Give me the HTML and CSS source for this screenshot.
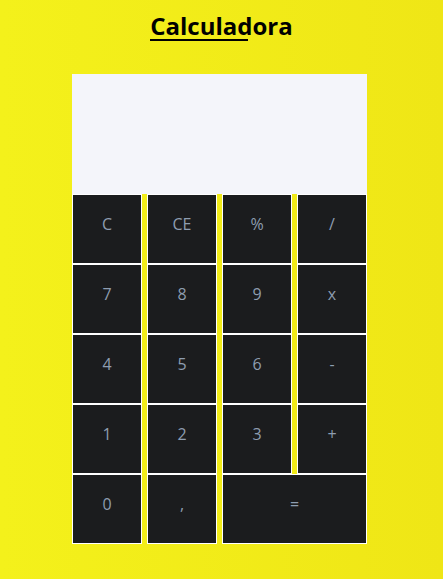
FILE: index.html
```html
<!DOCTYPE html>
<html lang="es">
<head>
<meta charset="utf-8">
<title>Calculadora</title>
<link rel="stylesheet" href="styles.css">
</head>
<body>
<h1 class="title"><span class="title-text">Calculadora</span></h1>
<div class="wrap">
  <div class="calc">
    <div class="display"></div>
    <div class="keys">
      <div class="key">C</div>
      <div class="key">CE</div>
      <div class="key">%</div>
      <div class="key">/</div>
      <div class="key">7</div>
      <div class="key">8</div>
      <div class="key">9</div>
      <div class="key">x</div>
      <div class="key">4</div>
      <div class="key">5</div>
      <div class="key">6</div>
      <div class="key">-</div>
      <div class="key">1</div>
      <div class="key">2</div>
      <div class="key">3</div>
      <div class="key">+</div>
      <div class="key">0</div>
      <div class="key">,</div>
      <div class="key key-wide">=</div>
    </div>
  </div>
</div>
</body>
</html>
```
FILE: styles.css
```css
html, body {
  margin: 0;
  padding: 0;
}
body {
  min-height: 579px;
  background: linear-gradient(to right, #f4f11b, #efe616);
  font-family: "Open Sans", sans-serif;
}
.title {
  margin: 11px 0 33px;
  display: flex;
  justify-content: center;
  font-family: "Open Sans", sans-serif;
  font-weight: 700;
  font-size: 24px;
  line-height: 30px;
  color: #000;
}
.title-text {
  position: relative;
}
.title-text::after {
  content: "";
  position: absolute;
  left: 0;
  top: 28px;
  width: 98px;
  height: 2px;
  background: #000;
}
.wrap {
  width: 299px;
  margin: 0 auto;
}
.calc {
  width: 295px;
}
.display {
  height: 120px;
  background: #f4f5fa;
}
.keys {
  display: grid;
  grid-template-columns: repeat(4, 70px);
  grid-auto-rows: 70px;
  column-gap: 5px;
}
.key {
  box-sizing: border-box;
  border: 1px solid #fff;
  background: #1b1c1e;
  color: #8e9db0;
  font-size: 16px;
  display: flex;
  align-items: center;
  justify-content: center;
  padding-bottom: 11px;
}
.key-wide {
  grid-column: span 2;
}
```
